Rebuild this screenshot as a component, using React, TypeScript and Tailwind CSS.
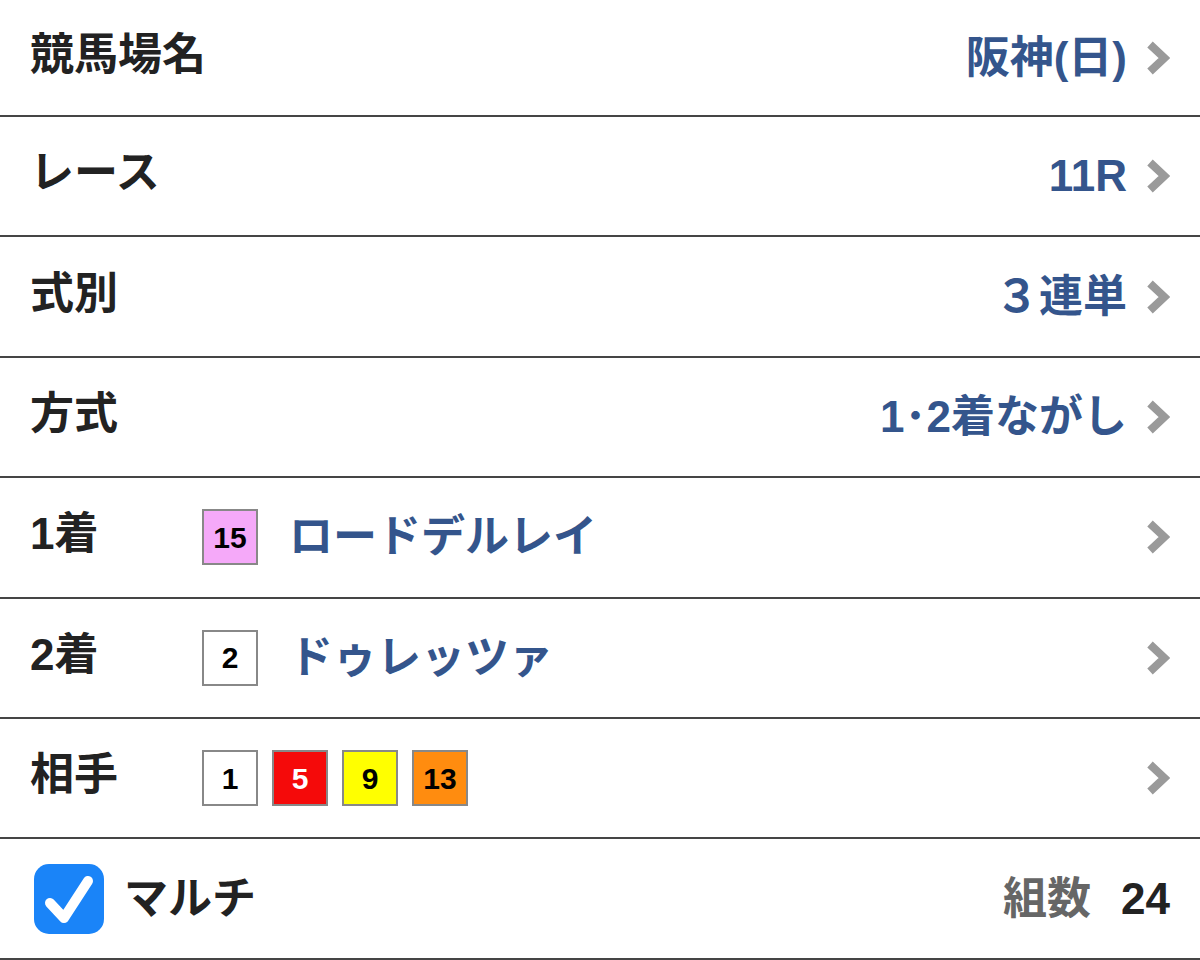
import React from "react";

const font = { fontFamily: '"Liberation Sans", "Noto Sans CJK JP", sans-serif' };

const Chevron = () => (
  <svg width="24" height="34" viewBox="0 0 24 34" className="shrink-0">
    <path d="M4 3.5 L18.5 17 L4 30.5" fill="none" stroke="#9a9a9a" strokeWidth="8" />
  </svg>
);

const Badge = ({ n, bg, fg = "text-black" }: { n: string; bg: string; fg?: string }) => (
  <div
    className={`w-[56px] h-[56px] border-2 border-[#888] flex items-center justify-center text-[30px] font-bold ${bg} ${fg}`}
  >
    {n}
  </div>
);

const Row = ({
  label,
  children,
  first,
}: {
  label: string;
  children: React.ReactNode;
  first?: boolean;
}) => (
  <div
    className={`flex items-center border-b-2 border-[#454545] pl-[30px] pr-[30px] ${
      first ? "h-[117px]" : "h-[120.4px]"
    }`}
  >
    <div className="min-w-[172px] shrink-0 whitespace-nowrap text-[44px] font-bold text-[#222] pb-[6px]">
      {label}
    </div>
    {children}
  </div>
);

const Value = ({ text }: { text: string }) => (
  <div className="flex-1 flex items-center justify-end gap-[19px]">
    <span className="whitespace-nowrap text-[44px] font-bold text-[#34558c]">{text}</span>
    <Chevron />
  </div>
);

export default function App() {
  return (
    <div className="w-[1200px] h-[960px] bg-white overflow-hidden" style={font}>
      <Row label="競馬場名" first>
        <Value text="阪神(日)" />
      </Row>
      <Row label="レース">
        <Value text="11R" />
      </Row>
      <Row label="式別">
        <Value text="３連単" />
      </Row>
      <Row label="方式">
        <Value text="1･2着ながし" />
      </Row>
      <Row label="1着">
        <div className="flex-1 flex items-center">
          <Badge n="15" bg="bg-[#f5a9f9]" />
          <span className="ml-[31px] text-[44px] font-bold text-[#34558c]">ロードデルレイ</span>
          <div className="flex-1" />
          <Chevron />
        </div>
      </Row>
      <Row label="2着">
        <div className="flex-1 flex items-center">
          <Badge n="2" bg="bg-white" />
          <span className="ml-[31px] text-[44px] font-bold text-[#34558c]">ドゥレッツァ</span>
          <div className="flex-1" />
          <Chevron />
        </div>
      </Row>
      <Row label="相手">
        <div className="flex-1 flex items-center gap-[14px]">
          <Badge n="1" bg="bg-white" />
          <Badge n="5" bg="bg-[#f50a0a]" fg="text-white" />
          <Badge n="9" bg="bg-[#ffff00]" />
          <Badge n="13" bg="bg-[#ff8c0f]" />
          <div className="flex-1" />
          <Chevron />
        </div>
      </Row>
      <div className="flex items-center h-[120.4px] border-b-2 border-[#454545] pl-[34px] pr-[30px]">
        <div className="w-[70px] h-[70px] rounded-[15px] bg-[#1a84f8] flex items-center justify-center">
          <svg width="70" height="70" viewBox="0 0 70 70">
            <path
              d="M16 39 L30 54 L54 17"
              fill="none"
              stroke="white"
              strokeWidth="10"
              strokeLinecap="round"
              strokeLinejoin="round"
            />
          </svg>
        </div>
        <span className="ml-[20px] text-[44px] font-bold text-[#222]">マルチ</span>
        <div className="flex-1" />
        <span className="text-[44px] font-bold text-[#666]">組数</span>
        <span className="ml-[30px] text-[44px] font-bold text-[#222]">24</span>
      </div>
    </div>
  );
}
